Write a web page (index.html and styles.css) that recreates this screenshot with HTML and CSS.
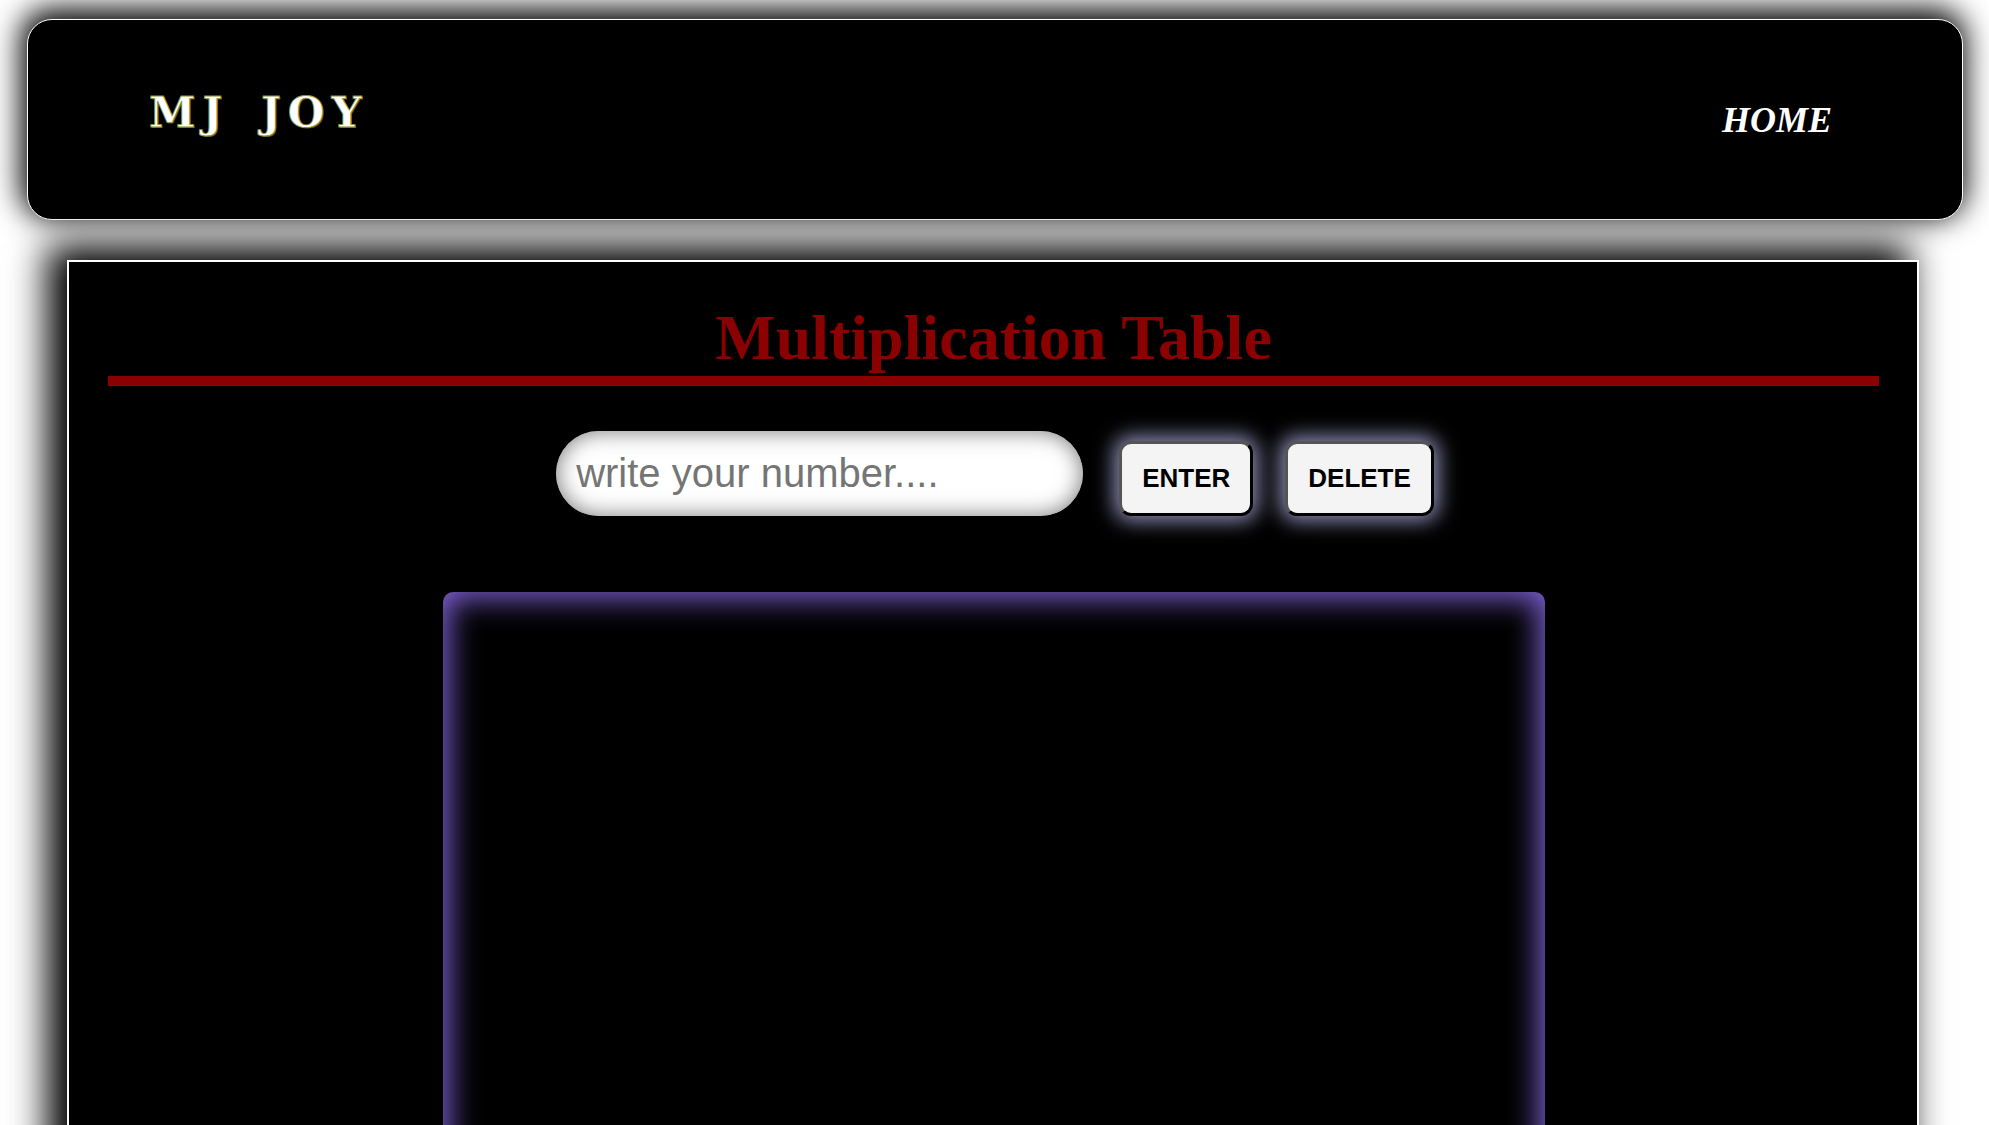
FILE: index.html
```html
<!DOCTYPE html>
<html lang="en">
<head>
<meta charset="utf-8">
<title>Multiplication Table</title>
<link rel="stylesheet" href="styles.css">
</head>
<body>
<header class="topbar">
  <div class="logo">MJ JOY</div>
  <nav class="nav"><a class="nav-link" href="#">HOME</a></nav>
</header>
<main class="panel">
  <h1 class="title">Multiplication Table</h1>
  <div class="controls">
    <input class="number-input" type="text" placeholder="write your number....">
    <button class="btn btn-enter">ENTER</button>
    <button class="btn btn-delete">DELETE</button>
  </div>
  <div class="result"></div>
</main>
</body>
</html>
```
FILE: styles.css
```css
html, body {
  margin: 0;
  padding: 0;
  background: #fff;
  overflow: hidden;
}

body {
  font-family: "Liberation Serif", "Times New Roman", serif;
}

.topbar {
  margin: 19px 26px 0 27px;
  height: 199px;
  background: #000;
  border: 1px solid #fff;
  border-radius: 25px;
  box-shadow: -2px -6px 30px 4px #000;
  display: flex;
  align-items: center;
  justify-content: space-between;
  padding: 0 130px 0 121px;
}

.logo {
  font-family: "DejaVu Serif", "Liberation Serif", serif;
  font-weight: bold;
  font-size: 42px;
  letter-spacing: 7px;
  word-spacing: 10px;
  color: #fff;
  -webkit-text-stroke: 0.8px #8f8f30;
  text-shadow: 1px 1px 0 #5c5c18;
  margin-bottom: 14px;
}

.nav-link {
  font-family: "Liberation Serif", "Times New Roman", serif;
  font-weight: bold;
  font-style: italic;
  font-size: 36px;
  color: #fff;
  text-decoration: none;
}

.panel {
  margin: 40px 70px 0 67px;
  background: #000;
  border: 2px solid #fff;
  box-shadow: -15px -10px 35px 5px #000;
  padding: 44px 38px 0 39px;
  height: 1000px;
}

.title {
  margin: 0;
  font-family: "Liberation Serif", "Times New Roman", serif;
  font-weight: bold;
  font-size: 64px;
  line-height: 64px;
  color: #8b0000;
  text-align: center;
  padding-bottom: 6px;
  border-bottom: 10px solid #8b0000;
}

.controls {
  display: flex;
  justify-content: center;
  align-items: baseline;
  margin-top: 45px;
  padding-left: 3px;
}

.number-input {
  width: 527px;
  height: 85px;
  box-sizing: border-box;
  border: none;
  outline: none;
  border-radius: 43px;
  background: #fff;
  box-shadow: inset 0 0 22px #777;
  padding: 0 20px;
  font-family: "Liberation Sans", Arial, sans-serif;
  font-size: 40px;
  color: #333;
}

.number-input::placeholder {
  color: #757575;
}

.btn {
  box-sizing: border-box;
  height: 75px;
  padding: 0 20px;
  border: 3px solid;
  border-color: #555 #000 #000 #555;
  border-radius: 12px;
  background: #f4f4f4;
  font-family: "Liberation Sans", Arial, sans-serif;
  font-weight: bold;
  font-size: 26px;
  color: #000;
  box-shadow: 0 0 20px 5px rgba(175, 175, 225, 0.8);
}

.btn-enter {
  margin-left: 36px;
}

.btn-delete {
  margin-left: 32px;
}

.result {
  width: 1102px;
  height: 700px;
  margin: 76px auto 0;
  border-radius: 10px;
  background: #000;
  box-shadow: inset 0 0 30px 6px #7e62d6;
}
```
